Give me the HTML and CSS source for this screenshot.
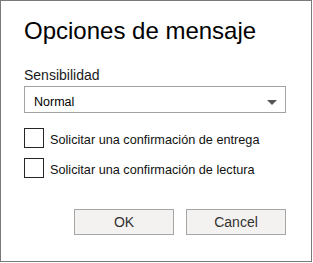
FILE: index.html
```html
<!DOCTYPE html>
<html lang="es">
<head>
  <meta charset="UTF-8">
  <meta name="viewport" content="width=device-width, initial-scale=1.0">
  <title>Opciones de mensaje</title>
  <link rel="stylesheet" href="styles.css">
</head>
<body>
  <div class="dialog">
    <h1 class="dialog-title">Opciones de mensaje</h1>

    <div class="field-label">Sensibilidad</div>
    <div class="select-box">
      <span class="select-value">Normal</span>
      <span class="select-arrow"></span>
    </div>

    <div class="options">
      <label class="check-row">
        <span class="check-box"></span>
        <span class="check-text">Solicitar una confirmación de entrega</span>
      </label>
      <label class="check-row">
        <span class="check-box"></span>
        <span class="check-text">Solicitar una confirmación de lectura</span>
      </label>
    </div>

    <div class="actions">
      <button class="btn">OK</button>
      <button class="btn">Cancel</button>
    </div>
  </div>
</body>
</html>
```

FILE: styles.css
```css
body {
  margin: 0;
  padding: 0;
  background-color: #ffffff;
  font-family: "Liberation Sans", Arial, sans-serif;
  color: #000;
}

.dialog {
  box-sizing: border-box;
  width: 312px;
  height: 262px;
  border: 1px solid #7a7a7a;
  padding: 16px 25px 0 23px;
  display: flex;
  flex-direction: column;
}

.dialog-title {
  margin: 0;
  font-size: 24px;
  font-weight: normal;
  line-height: 28px;
}

.field-label {
  margin-top: 22px;
  font-size: 14px;
  line-height: 16px;
  color: #1a1a1a;
}

.select-box {
  box-sizing: border-box;
  margin-top: 3px;
  height: 27px;
  border: 1px solid #a3a3a3;
  display: flex;
  align-items: flex-start;
  justify-content: space-between;
  padding: 5px 8px 0 9px;
}

.select-value {
  font-size: 12.5px;
  line-height: 20px;
}

.select-arrow {
  margin-top: 8px;
  width: 0;
  height: 0;
  border-left: 5px solid transparent;
  border-right: 5px solid transparent;
  border-top: 5px solid #555;
}

.options {
  margin-top: 15px;
  display: flex;
  flex-direction: column;
  gap: 10px;
}

.check-row {
  display: flex;
  align-items: flex-start;
  gap: 6px;
  height: 20px;
}

.check-box {
  box-sizing: border-box;
  width: 20px;
  height: 20px;
  border: 1px solid #262626;
  background: #fff;
}

.check-text {
  margin-top: 4px;
  font-size: 12.7px;
  line-height: 16px;
  color: #111;
}

.actions {
  margin-top: 31px;
  display: flex;
  justify-content: flex-end;
  gap: 12px;
}

.btn {
  box-sizing: border-box;
  width: 100px;
  height: 26px;
  padding: 0;
  border: 1px solid #a6a6a6;
  background-color: #f3f2f1;
  font-family: "Liberation Sans", Arial, sans-serif;
  font-size: 14px;
  color: #323130;
}
```
